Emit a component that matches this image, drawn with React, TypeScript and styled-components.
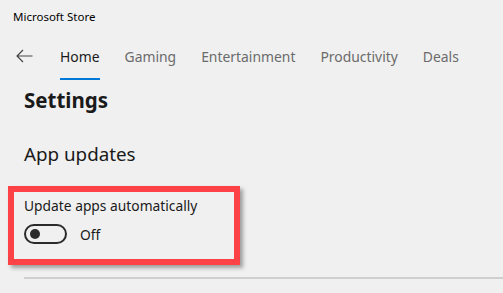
import styled, { createGlobalStyle } from "styled-components";

const Global = createGlobalStyle`
  html, body {
    margin: 0;
    padding: 0;
    background: #f0f0f0;
    font-family: "Noto Sans", "Open Sans", sans-serif;
    color: #1a1a1a;
    overflow: hidden;
  }
`;

const Page = styled.div`
  width: 503px;
  height: 293px;
  display: flex;
  flex-direction: column;
  background: #f0f0f0;
`;

const TitleBar = styled.div`
  height: 32px;
  display: flex;
  align-items: center;
  padding-left: 13px;
  font-size: 11.5px;
  color: #000;
`;

const Nav = styled.nav`
  height: 48px;
  display: flex;
  align-items: stretch;
  padding-left: 16px;
`;

const Back = styled.button`
  border: 0;
  background: none;
  padding: 0;
  width: 17px;
  margin-right: 27px;
  display: flex;
  align-items: center;
  color: #444;
  cursor: pointer;
`;

const Tab = styled.div<{ $active?: boolean }>`
  position: relative;
  display: flex;
  align-items: center;
  margin-right: 25px;
  font-size: 13.9px;
  color: ${(p) => (p.$active ? "#1a1a1a" : "#6b6b6b")};

  &::after {
    content: "";
    display: ${(p) => (p.$active ? "block" : "none")};
    position: absolute;
    left: 0;
    right: 0;
    bottom: 0;
    height: 2px;
    background: #0078d7;
  }
`;

const Content = styled.div`
  display: flex;
  flex-direction: column;
`;

const Heading = styled.h1`
  margin: 4px 0 0 24px;
  font-size: 20.5px;
  font-weight: 700;
  line-height: 32px;
`;

const Section = styled.h2`
  margin: 24px 0 0 24px;
  font-size: 18.8px;
  font-weight: 400;
  line-height: 28px;
`;

const Highlight = styled.div`
  margin: 18px 0 0 8px;
  width: 210px;
  height: 63px;
  border: 6px solid #fc4246;
  box-shadow: 3px 3px 4px rgba(0, 0, 0, 0.35);
  padding: 4px 0 0 10px;
  display: flex;
  flex-direction: column;
  gap: 8px;
`;

const Label = styled.div`
  font-size: 13.8px;
  line-height: 20px;
`;

const ToggleRow = styled.div`
  display: flex;
  align-items: center;
  gap: 13px;
  font-size: 13.8px;
`;

const Toggle = styled.div`
  box-sizing: border-box;
  width: 43px;
  height: 20px;
  border: 2px solid #2b2b2b;
  border-radius: 10px;
  display: flex;
  align-items: center;
  padding-left: 4px;

  &::before {
    content: "";
    width: 10px;
    height: 10px;
    border-radius: 50%;
    background: #2b2b2b;
  }
`;

const Divider = styled.div`
  margin: 12px 0 0 24px;
  height: 2px;
  background: #cfcfcf;
`;

export default function App() {
  return (
    <Page>
      <Global />
      <TitleBar>Microsoft Store</TitleBar>
      <Nav>
        <Back aria-label="Back">
          <svg width="17" height="14" viewBox="0 0 17 14" fill="none" stroke="currentColor" strokeWidth="1.2">
            <path d="M16.5 7H1M7 1L1 7l6 6" />
          </svg>
        </Back>
        <Tab $active>Home</Tab>
        <Tab>Gaming</Tab>
        <Tab>Entertainment</Tab>
        <Tab>Productivity</Tab>
        <Tab>Deals</Tab>
      </Nav>
      <Content>
        <Heading>Settings</Heading>
        <Section>App updates</Section>
        <Highlight>
          <Label>Update apps automatically</Label>
          <ToggleRow>
            <Toggle />
            <span>Off</span>
          </ToggleRow>
        </Highlight>
        <Divider />
      </Content>
    </Page>
  );
}
